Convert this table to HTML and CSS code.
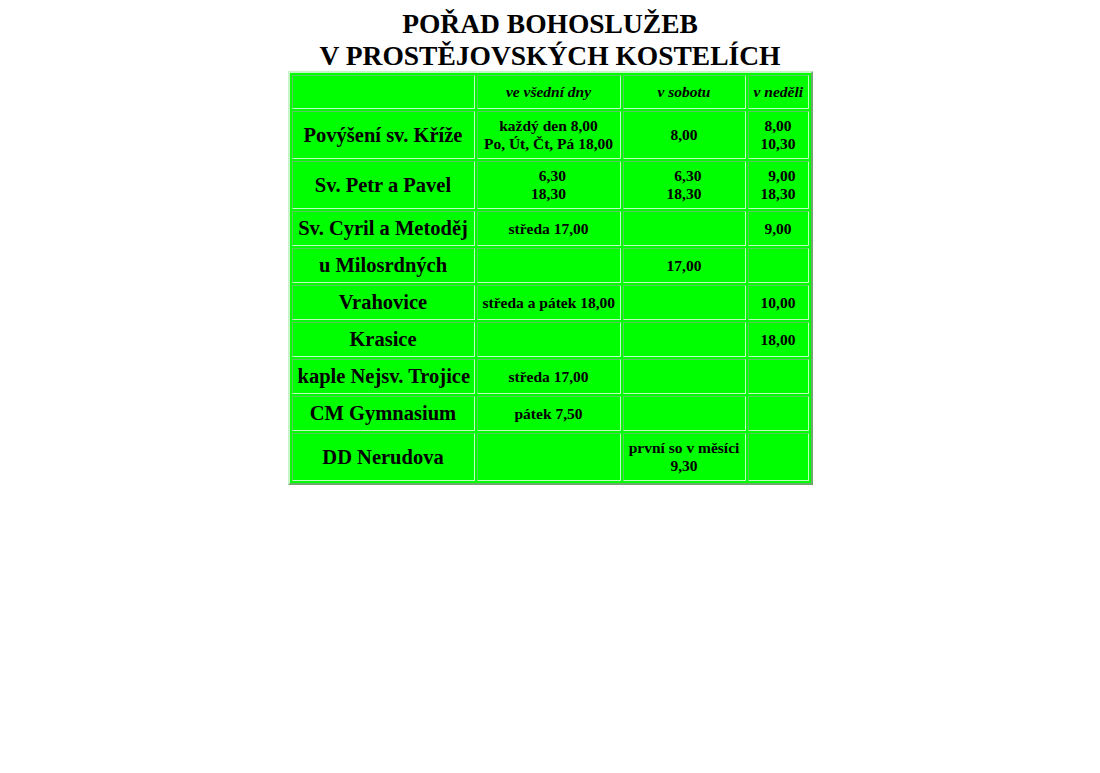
FILE: index.html
```html
<!DOCTYPE html>
<html lang="cs">
<head>
<meta charset="utf-8">
<title>Pořad bohoslužeb</title>
<link rel="stylesheet" href="styles.css">
</head>
<body>
<div class="title">POŘAD BOHOSLUŽEB<br>V PROSTĚJOVSKÝCH KOSTELÍCH</div>
<table class="schedule">
  <tr class="head">
    <td class="c1"></td>
    <td class="c2">ve všední dny</td>
    <td class="c3">v sobotu</td>
    <td class="c4">v neděli</td>
  </tr>
  <tr class="two">
    <td class="name">Povýšení sv. Kříže</td>
    <td>každý den 8,00<br>Po, Út, Čt, Pá 18,00</td>
    <td>8,00</td>
    <td>8,00<br>10,30</td>
  </tr>
  <tr class="two">
    <td class="name">Sv. Petr a Pavel</td>
    <td>&nbsp;&nbsp;6,30<br>18,30</td>
    <td>&nbsp;&nbsp;6,30<br>18,30</td>
    <td>&nbsp;&nbsp;9,00<br>18,30</td>
  </tr>
  <tr class="one">
    <td class="name">Sv. Cyril a Metoděj</td>
    <td>středa 17,00</td>
    <td></td>
    <td>9,00</td>
  </tr>
  <tr class="one">
    <td class="name">u Milosrdných</td>
    <td></td>
    <td>17,00</td>
    <td></td>
  </tr>
  <tr class="one">
    <td class="name">Vrahovice</td>
    <td>středa a pátek 18,00</td>
    <td></td>
    <td>10,00</td>
  </tr>
  <tr class="one">
    <td class="name">Krasice</td>
    <td></td>
    <td></td>
    <td>18,00</td>
  </tr>
  <tr class="one">
    <td class="name">kaple Nejsv. Trojice</td>
    <td>středa 17,00</td>
    <td></td>
    <td></td>
  </tr>
  <tr class="one">
    <td class="name">CM Gymnasium</td>
    <td>pátek 7,50</td>
    <td></td>
    <td></td>
  </tr>
  <tr class="two">
    <td class="name">DD Nerudova</td>
    <td></td>
    <td>první so v měsíci<br>9,30</td>
    <td></td>
  </tr>
</table>
</body>
</html>
```

FILE: styles.css
```css
html, body {
  background: #ffffff;
}
body {
  margin: 8px;
  font-family: "Liberation Serif", "Times New Roman", serif;
  color: #000000;
}
.title {
  text-align: center;
  font-weight: bold;
  font-size: 27.5px;
  line-height: 31.5px;
}
.schedule {
  margin: 0 auto;
  table-layout: fixed;
  width: 525px;
  border-collapse: separate;
  border-spacing: 2px;
  background: #00ff00;
  border: 2px solid;
  border-color: #c8f5c8 #6fa86f #6fa86f #c8f5c8;
}
.schedule td {
  border: 1px solid;
  border-color: #5cc85c #c0ffc0 #c0ffc0 #5cc85c;
  padding: 5px;
  text-align: center;
  vertical-align: middle;
  font-weight: bold;
  font-size: 15.5px;
  line-height: 18px;
  white-space: nowrap;
  overflow: hidden;
}
.schedule .c1 { width: 171px; }
.schedule .c2 { width: 132px; }
.schedule .c3 { width: 111px; }
.schedule .c4 { width: 49px; }
.head td {
  height: 22px;
  line-height: 22px;
  font-style: italic;
}
.one td {
  height: 23px;
}
.two td {
  height: 36px;
}
.schedule td.name {
  font-size: 20.5px;
  line-height: 23px;
}
```
